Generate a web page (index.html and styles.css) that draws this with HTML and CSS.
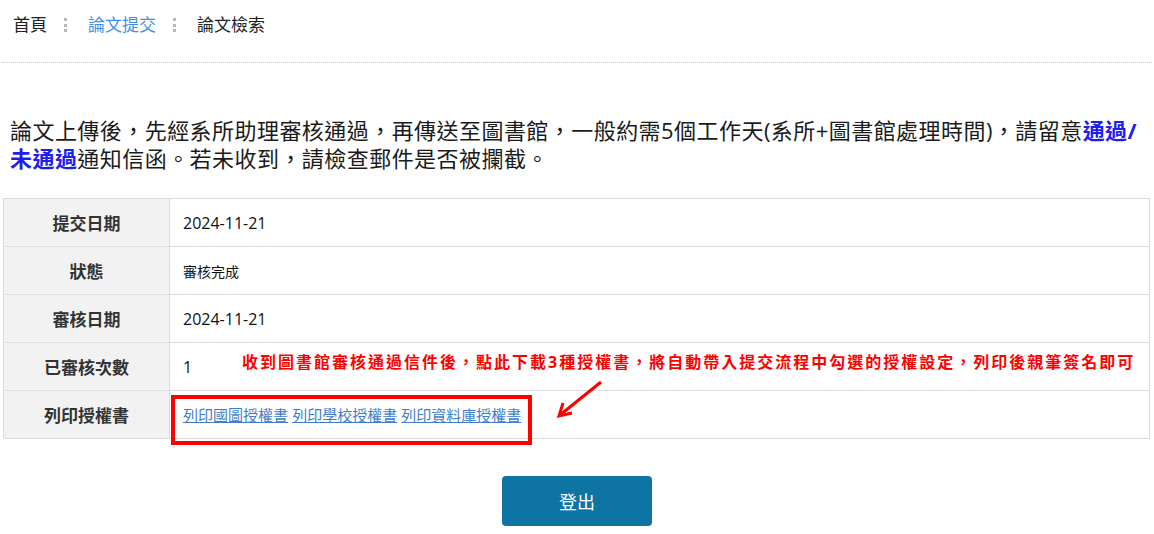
FILE: index.html
```html
<!DOCTYPE html>
<html lang="zh-Hant">
<head>
<meta charset="utf-8">
<title>論文檢索</title>
<link rel="stylesheet" href="styles.css">
</head>
<body>
<nav class="crumbs">
  <span class="crumb">首頁</span>
  <span class="sep"></span>
  <a class="crumb link" href="#">論文提交</a>
  <span class="sep"></span>
  <span class="crumb">論文檢索</span>
</nav>

<p class="notice">論文上傳後，先經系所助理審核通過，再傳送至圖書館，一般約需5個工作天(系所+圖書館處理時間)，請留意<b class="hl">通過/</b><br><b class="hl">未通過</b>通知信函。若未收到，請檢查郵件是否被攔截。</p>

<div class="table-wrap">
  <table class="info">
    <tr>
      <th>提交日期</th>
      <td>2024-11-21</td>
    </tr>
    <tr>
      <th>狀態</th>
      <td class="small">審核完成</td>
    </tr>
    <tr>
      <th>審核日期</th>
      <td>2024-11-21</td>
    </tr>
    <tr>
      <th>已審核次數</th>
      <td>1</td>
    </tr>
    <tr>
      <th>列印授權書</th>
      <td class="links"><a href="#">列印國圖授權書</a> <a href="#">列印學校授權書</a> <a href="#">列印資料庫授權書</a></td>
    </tr>
  </table>
  <div class="note">收到圖書館審核通過信件後，點此下載3種授權書，將自動帶入提交流程中勾選的授權設定，列印後親筆簽名即可</div>
  <svg class="arrow" width="52" height="44" viewBox="0 0 52 44">
    <line x1="47" y1="5" x2="6" y2="38" stroke="#f00" stroke-width="3"/>
    <polyline points="9,26 5,39 18,36" fill="none" stroke="#f00" stroke-width="3"/>
  </svg>
  <div class="redbox"></div>
</div>

<div class="actions">
  <button class="logout" type="button">登出</button>
</div>
</body>
</html>
```

FILE: styles.css
```css
html, body {
  margin: 0;
  padding: 0;
  background: #fff;
}
body {
  font-family: "Open Sans", "Noto Sans CJK TC", sans-serif;
  color: #222;
}
.crumbs {
  display: flex;
  align-items: center;
  margin: 0 2px;
  padding: 1px 0 14px 11px;
  height: 47px;
  box-sizing: content-box;
  border-bottom: 1px dotted #c4c4c4;
}
.crumb {
  font-size: 17px;
  line-height: 22px;
  color: #222;
  text-decoration: none;
}
.crumb.link {
  color: #3f8fe6;
}
.sep {
  width: 3px;
  height: 14px;
  margin: 0 21px 0 17px;
  background: repeating-linear-gradient(to bottom, #b8b8b8 0 3px, transparent 3px 5.5px);
}
.notice {
  margin: 53px 0 0 10px;
  font-size: 22px;
  line-height: 28px;
  letter-spacing: 0.45px;
  color: #1a1a1a;
}
.hl {
  color: #1e1ef0;
  font-weight: 700;
}
.table-wrap {
  position: relative;
  margin: 26px 4px 0 3px;
}
.info {
  width: 100%;
  border-collapse: collapse;
  border: 1px solid #d6d6d6;
}
.info th, .info td {
  border: 1px solid #dcdcdc;
  height: 47px;
  padding: 0;
}
.info th {
  width: 165px;
  background: #f2f2f2;
  font-size: 17px;
  font-weight: 700;
  color: #333;
  text-align: center;
}
.info td {
  padding-left: 13px;
  font-size: 16px;
  color: #111;
}
.info td.small {
  font-size: 14px;
}
.info td.links a {
  font-size: 15px;
  color: #3f7ccc;
  text-decoration: underline;
}
.note {
  position: absolute;
  left: 239px;
  top: 153px;
  font-size: 16px;
  line-height: 22px;
  font-weight: 700;
  letter-spacing: 2px;
  color: #f00;
  white-space: nowrap;
}
.arrow {
  position: absolute;
  left: 551px;
  top: 179px;
}
.redbox {
  position: absolute;
  left: 168px;
  top: 197px;
  width: 361px;
  height: 50px;
  border: 4px solid #f00;
  box-sizing: border-box;
}
.actions {
  display: flex;
  justify-content: center;
  margin-top: 37px;
}
.logout {
  width: 150px;
  height: 50px;
  border: none;
  border-radius: 4px;
  background: #0d74a3;
  color: #fff;
  font-family: "Open Sans", "Noto Sans CJK TC", sans-serif;
  font-size: 18px;
}
```
